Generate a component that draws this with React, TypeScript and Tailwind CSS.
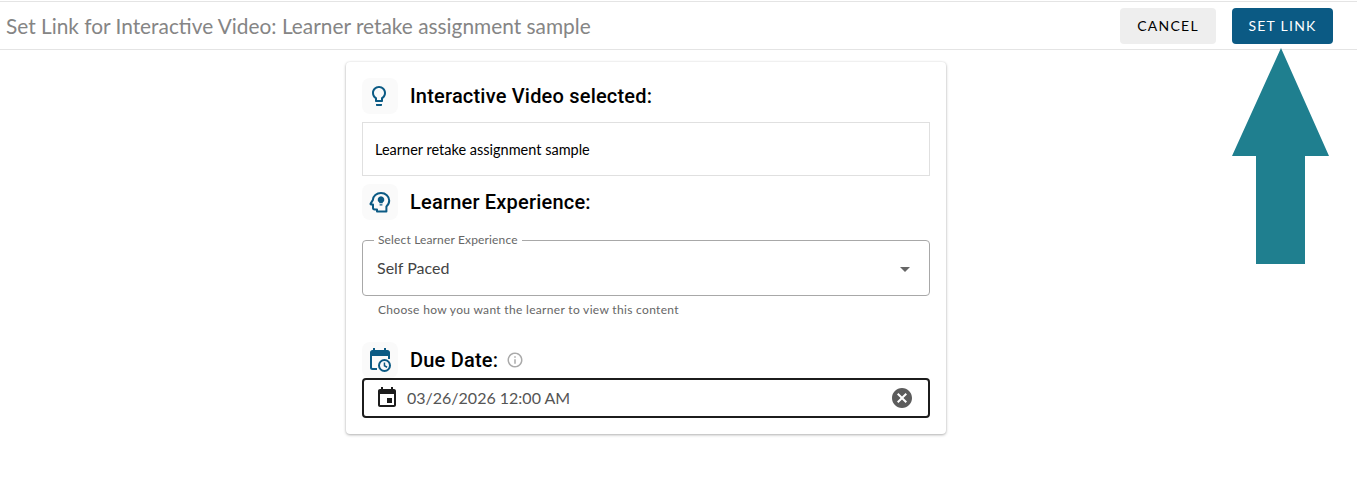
// App.tsx
const LATO = 'font-["Lato","Noto_Sans",sans-serif]';

function IconBox({ children }: { children: React.ReactNode }) {
  return (
    <div className="w-9 h-9 shrink-0 rounded-lg bg-[#fafafa] flex items-center justify-center">
      {children}
    </div>
  );
}

function SectionTitle({ children }: { children: React.ReactNode }) {
  return (
    <h2 className='ml-3 font-["Roboto",sans-serif] font-medium text-[20px] tracking-[0.2px] leading-9 text-black'>
      {children}
    </h2>
  );
}

export default function App() {
  return (
    <div className={`${LATO} relative w-[1357px] h-[489px] overflow-hidden bg-white`}>
      {/* top bar */}
      <header className="mt-px h-[49px] border-t border-b border-[#e4e4e4] flex items-center justify-between pl-1.5 pr-6">
        <h1 className="pt-0.5 text-[20.85px] leading-none text-[#858585]">
          Set Link for Interactive Video: Learner retake assignment sample
        </h1>
        <div className="flex items-center gap-4">
          <button className="w-24 h-9 rounded bg-[#eeeeee] text-sm tracking-[1.25px] text-black">CANCEL</button>
          <button className="w-[101px] h-9 rounded bg-[#0b5a84] text-sm tracking-[1.25px] text-white">SET LINK</button>
        </div>
      </header>

      {/* arrow pointing at the set link button */}
      <svg className="absolute left-[1232px] top-[48px]" width="97" height="216" viewBox="0 0 97 216">
        <path d="M49 0 L97 108 H73 V216 H24 V108 H0 Z" fill="#1f7f8f" />
      </svg>

      <main className="pl-[346px] pt-3">
        <section className="w-[600px] h-[372px] rounded bg-white p-4 shadow-[0_1px_3px_rgba(0,0,0,0.3),0_0_2px_rgba(0,0,0,0.08)]">
          <div className="flex items-center">
            <IconBox>
              <svg className="-ml-0.5" width="24" height="24" viewBox="0 0 24 24" fill="#0b5a84">
                <path d="M9 21c0 .55.45 1 1 1h4c.55 0 1-.45 1-1v-1H9v1zm3-19C8.14 2 5 5.14 5 9c0 2.38 1.19 4.47 3 5.74V17c0 .55.45 1 1 1h6c.55 0 1-.45 1-1v-2.26c1.81-1.27 3-3.36 3-5.74 0-3.86-3.14-7-7-7zm2.85 11.1l-.85.6V16h-4v-2.3l-.85-.6C7.8 12.16 7 10.63 7 9c0-2.76 2.24-5 5-5s5 2.24 5 5c0 1.63-.8 3.16-2.15 4.1z" />
              </svg>
            </IconBox>
            <SectionTitle>Interactive Video selected:</SectionTitle>
          </div>

          <div className="mt-2 h-[54px] border border-[#e0e0e0] flex items-center px-3 pt-0.5 text-[14.5px] text-black">
            Learner retake assignment sample
          </div>

          <div className="mt-2 flex items-center">
            <IconBox>
              <svg width="24" height="24" viewBox="0 0 24 24" fill="none">
                <path
                  d="M13 3c-4.4 0-8 3-8.200 7.100L2.600 13.600c-.3.5 0 1 .6 1H5v3.200c0 1 .8 1.700 1.700 1.700H9v2h9.400v-5c1.800-1.500 2.800-3.700 2.800-6C21.200 6.200 17.600 3 13 3z"
                  stroke="#0b5a84"
                  strokeWidth="2"
                  strokeLinejoin="round"
                />
                <path d="M13 6.200a3.400 3.400 0 0 0-1.700 6.300v.7h3.400v-.7A3.400 3.400 0 0 0 13 6.200zM11.600 14.200h2.800v1.400h-2.800z" fill="#0b5a84" />
              </svg>
            </IconBox>
            <SectionTitle>Learner Experience:</SectionTitle>
          </div>

          <fieldset className="mt-[14px] h-[62px] -mb-px border border-[#a8a8a8] rounded px-[11px] flex">
            <legend className="px-[4px] text-[12px] tracking-[0.15px] leading-3 text-[#666666]">Select Learner Experience</legend>
            <div className="flex-1 flex items-center justify-between">
              <span className="ml-[3px] text-base text-[#444444] -mt-1.5">Self Paced</span>
              <svg className="mr-px -mt-1" width="24" height="24" viewBox="0 0 24 24" fill="#666666">
                <path d="M7 10l5 5 5-5z" />
              </svg>
            </div>
          </fieldset>
          <p className="mt-[7px] ml-4 text-xs leading-4 text-[#666666] tracking-[0.32px]">
            Choose how you want the learner to view this content
          </p>

          <div className="mt-6 flex items-center">
            <IconBox>
              <svg width="24" height="26" viewBox="0 0 24 26" fill="#0b5a84">
                <path d="M5 1h2v2h9V1h2v2h1.500C20.900 3 22 4.100 22 5.500V12h-2V9H4v11.500c0 .3.2.5.5.5H9v2H4.500A2.500 2.500 0 0 1 2 20.500v-15C2 4.100 3.100 3 4.500 3H5V1z" />
                <path d="M16.500 12a6.500 6.500 0 1 0 0 13 6.500 6.500 0 0 0 0-13zm0 2a4.500 4.500 0 1 1 0 9 4.500 4.500 0 0 1 0-9zm-.8 1.500v3.700l3 1.700.8-1.300-2.300-1.300v-2.800h-1.500z" />
              </svg>
            </IconBox>
            <SectionTitle>Due Date:</SectionTitle>
            <svg className="ml-2" width="18" height="18" viewBox="0 0 24 24" fill="#aaaaaa">
              <path d="M11 7h2v2h-2zm0 4h2v6h-2zm1-9C6.480 2 2 6.480 2 12s4.480 10 10 10 10-4.480 10-10S17.520 2 12 2zm0 18c-4.410 0-8-3.590-8-8s3.590-8 8-8 8 3.590 8 8-3.590 8-8 8z" />
            </svg>
          </div>

          <div className="h-10 rounded border-2 border-[#1c1c1c] flex items-center pl-[11px] pr-[14px]">
            <svg width="24" height="24" viewBox="0 0 24 24" fill="#1c1c1c">
              <path d="M17 12h-5v5h5v-5zM16 1v2H8V1H6v2H5c-1.110 0-1.990.9-1.990 2L3 19c0 1.100.890 2 2 2h14c1.100 0 2-.9 2-2V5c0-1.100-.9-2-2-2h-1V1h-2zm3 18H5V8h14v11z" />
            </svg>
            <span className="ml-[8px] flex-1 text-base text-[#555555]">03/26/2026 12:00 AM</span>
            <svg width="24" height="24" viewBox="0 0 24 24" fill="#5c5c5c">
              <path d="M12 2C6.470 2 2 6.470 2 12s4.470 10 10 10 10-4.470 10-10S17.530 2 12 2zm5 13.590L15.590 17 12 13.410 8.410 17 7 15.590 10.590 12 7 8.410 8.410 7 12 10.590 15.590 7 17 8.410 13.410 12 17 15.590z" />
            </svg>
          </div>
        </section>
      </main>
    </div>
  );
}
